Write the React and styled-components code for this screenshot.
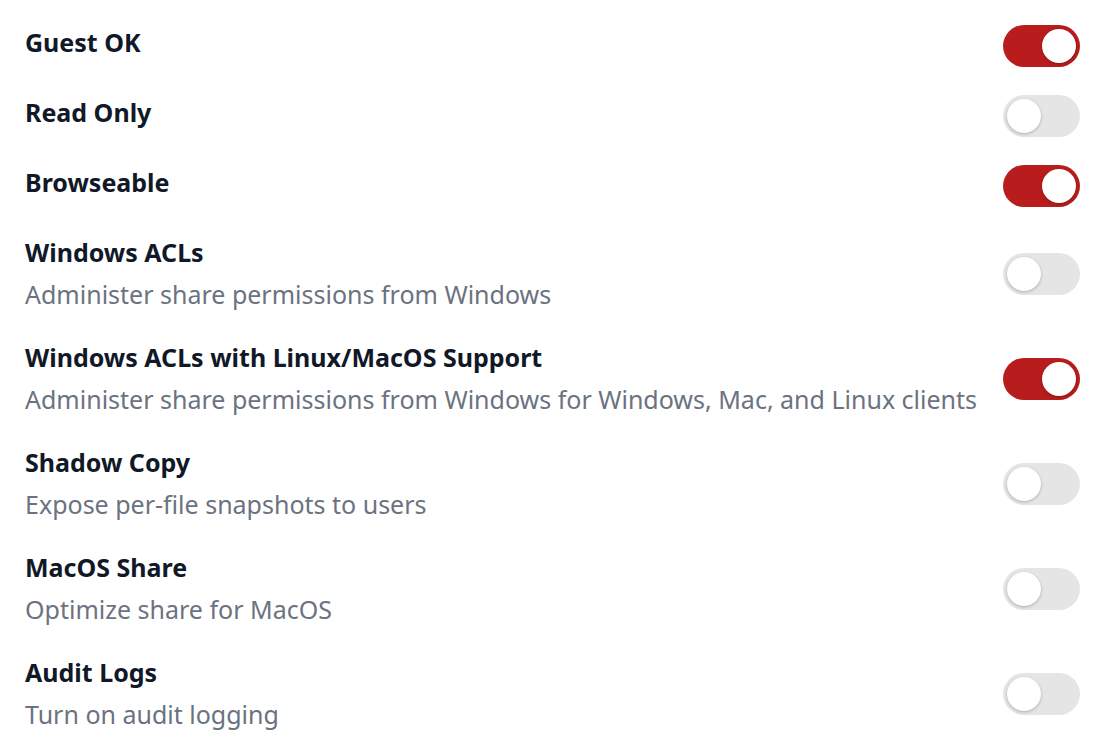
import styled, { createGlobalStyle } from "styled-components";

const GlobalStyle = createGlobalStyle`
  body {
    margin: 0;
    background: #ffffff;
    font-family: "Noto Sans", "Open Sans", sans-serif;
  }
`;

const settings = [
  { title: "Guest OK", on: true },
  { title: "Read Only", on: false },
  { title: "Browseable", on: true },
  { title: "Windows ACLs", text: "Administer share permissions from Windows", on: false },
  {
    title: "Windows ACLs with Linux/MacOS Support",
    text: "Administer share permissions from Windows for Windows, Mac, and Linux clients",
    on: true,
  },
  { title: "Shadow Copy", text: "Expose per-file snapshots to users", on: false },
  { title: "MacOS Share", text: "Optimize share for MacOS", on: false },
  { title: "Audit Logs", text: "Turn on audit logging", on: false },
];

const Toggle = ({ on }) => (
  <Track $on={on}>
    <Knob $on={on} />
  </Track>
);

const App = () => {
  return (
    <>
      <GlobalStyle />
      <List>
        {settings.map((s) => (
          <Row key={s.title}>
            <Label>
              <Title>{s.title}</Title>
              {s.text && <Description>{s.text}</Description>}
            </Label>
            <Toggle on={s.on} />
          </Row>
        ))}
      </List>
    </>
  );
};

export default App;

const List = styled.div`
  display: flex;
  flex-direction: column;
  padding: 11px 36px 0 25px;
`;

const Row = styled.div`
  display: flex;
  align-items: flex-start;
  justify-content: space-between;
  padding: 14px 0;
`;

const Label = styled.div`
  display: flex;
  flex-direction: column;
  gap: 8px;
  padding-bottom: 1px;
`;

const Title = styled.p`
  margin: 0;
  font-weight: 700;
  font-size: 25px;
  line-height: 34px;
  color: #111827;
`;

const Description = styled.p`
  margin: 0;
  font-size: 25px;
  line-height: 34px;
  color: #6b7280;
`;

const Track = styled.div`
  position: relative;
  flex-shrink: 0;
  align-self: center;
  width: 77px;
  height: 42px;
  border-radius: 21px;
  background: ${({ $on }) => ($on ? "#b91c1c" : "#e5e5e5")};
`;

const Knob = styled.span`
  position: absolute;
  top: 4px;
  left: ${({ $on }) => ($on ? "39px" : "4px")};
  width: 34px;
  height: 34px;
  border-radius: 50%;
  background: #ffffff;
  box-shadow: 0 1px 3px rgba(0, 0, 0, 0.25);
`;
